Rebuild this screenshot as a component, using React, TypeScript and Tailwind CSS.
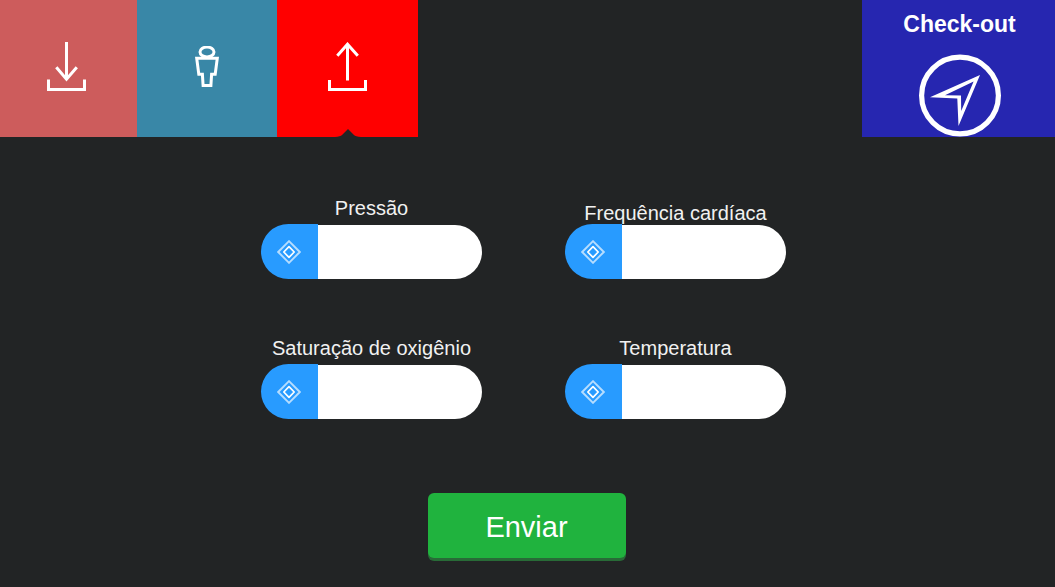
import type { ReactNode } from "react";

const vitals = [
  { id: "pressao", label: "Pressão", align: "items-center" },
  { id: "frequencia", label: "Frequência cardíaca", align: "items-end" },
  { id: "saturacao", label: "Saturação de oxigênio", align: "items-center" },
  { id: "temperatura", label: "Temperatura", align: "items-center" },
];

function DownloadIcon() {
  return (
    <svg width="39" height="49" viewBox="0 0 39 49" fill="none" stroke="#fff" strokeWidth="3" aria-hidden="true">
      <path d="M19.5 0v37M9.3 25.2 19.5 37.2 29.8 25.2" />
      <path d="M1.5 37.5v10h36v-10" />
    </svg>
  );
}

function UploadIcon() {
  return (
    <svg width="39" height="49" viewBox="0 0 39 49" fill="none" stroke="#fff" strokeWidth="3" aria-hidden="true">
      <path d="M19.5 2v36.5M9.3 13.8 19.5 2.2 29.8 13.8" />
      <path d="M1.5 38v9.5h36V38" />
    </svg>
  );
}

function PersonIcon() {
  return (
    <svg width="24" height="41" viewBox="0 0 24 41" fill="none" stroke="#fff" strokeWidth="3" aria-hidden="true">
      <ellipse cx="12" cy="6" rx="7" ry="4.9" />
      <path d="M1.7 12.3h20.6l-2.1 16h-3.6L15.9 39.5H8.1L7.4 28.3H3.8z" />
    </svg>
  );
}

function CompassIcon() {
  return (
    <svg width="82" height="83" viewBox="0 0 82 83" fill="none" stroke="#fff" aria-hidden="true">
      <circle cx="41" cy="41.5" r="38.4" strokeWidth="5.2" />
      <path
        fill="#fff"
        stroke="none"
        fillRule="evenodd"
        d="M61 21 39.5 72 38.3 44.6 11 43.2zM54.6 27.4 26 41.2 42 41.6 42.2 57z"
      />
    </svg>
  );
}

function DiamondIcon() {
  return (
    <svg width="24" height="24" viewBox="0 0 24 24" fill="none" aria-hidden="true">
      <path d="M12 1.2 22.8 12 12 22.8 1.2 12z" stroke="#b6ddff" strokeWidth="1.9" />
      <path d="M12 6.6 17.2 12 12 17.4 6.8 12z" stroke="#fff" strokeWidth="1.7" strokeLinejoin="round" />
    </svg>
  );
}

function Tab({ label, className, children }: { label: string; className: string; children: ReactNode }) {
  return (
    <button type="button" aria-label={label} className={`flex items-center justify-center pb-1 ${className}`}>
      {children}
    </button>
  );
}

export default function App() {
  return (
    <div className="min-h-screen bg-[#222425] font-['Liberation_Sans',sans-serif] text-white">
      <header className="flex h-[137px] justify-between">
        <nav className="flex">
          <Tab label="Entrada" className="w-[137px] bg-[#cd5c5c] pr-1">
            <DownloadIcon />
          </Tab>
          <Tab label="Paciente" className="w-[140px] bg-[#3987a7]">
            <PersonIcon />
          </Tab>
          <Tab label="Saída" className="relative w-[141px] bg-[#ff0000]">
            <UploadIcon />
            <svg className="absolute bottom-0 left-1/2 -translate-x-1/2" width="28" height="8" viewBox="0 0 28 8" aria-hidden="true">
              <path d="M14 0 20 6Q21.5 7.4 27 8H1Q6.5 7.4 8 6z" fill="#222425" />
            </svg>
          </Tab>
        </nav>
        <button type="button" className="flex w-[193px] flex-col items-center justify-between bg-[#2626b0] pt-2 pl-0.5">
          <span className="text-[23px] leading-8 font-bold">Check-out</span>
          <CompassIcon />
        </button>
      </header>

      <form className="flex flex-col items-center pt-[54px] pr-0.5" onSubmit={(event) => event.preventDefault()}>
        <div className="grid grid-cols-2 gap-x-[83px] gap-y-[52px] pr-1.5">
          {vitals.map(({ id, label, align }) => (
            <div key={id} className="w-[221px]">
              <label htmlFor={id} className={`flex h-[33px] justify-center text-xl leading-[22px] text-[#f1f1f1] ${align}`}>
                {label}
              </label>
              <div className="flex h-[55px] items-end">
                <span className="flex h-[55px] w-[57px] shrink-0 items-center justify-center rounded-l-[28px] bg-[#289bff] pr-px">
                  <DiamondIcon />
                </span>
                <input
                  id={id}
                  type="text"
                  className="h-[54px] w-full min-w-0 rounded-r-[27px] bg-white px-3 text-xl text-[#222425] outline-none"
                />
              </div>
            </div>
          ))}
        </div>
        <button
          type="submit"
          className="mt-[74px] h-[65px] w-[198px] rounded-md bg-[#20b33e] pt-1 text-[29px] shadow-[0_3px_0_#286b37]"
        >
          Enviar
        </button>
      </form>
    </div>
  );
}
